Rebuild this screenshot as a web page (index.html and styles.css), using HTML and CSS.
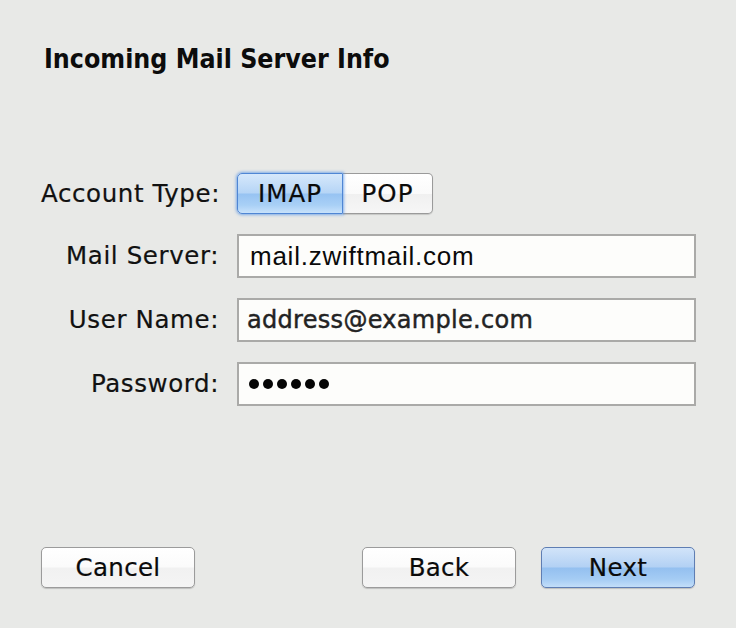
FILE: index.html
```html
<!DOCTYPE html>
<html>
<head>
<meta charset="utf-8">
<link rel="stylesheet" href="styles.css">
</head>
<body>
<div class="page">
  <h1 class="title">Incoming Mail Server Info</h1>
  <div class="form">
    <div class="label">Account Type:</div>
    <div class="segmented">
      <div class="seg seg-on">IMAP</div>
      <div class="seg seg-off">POP</div>
    </div>
    <div class="label">Mail Server:</div>
    <div class="field field-server">mail.zwiftmail.com</div>
    <div class="label">User Name:</div>
    <div class="field field-user">address@example.com</div>
    <div class="label">Password:</div>
    <div class="field field-pass">
      <span class="dot"></span><span class="dot"></span><span class="dot"></span><span class="dot"></span><span class="dot"></span><span class="dot"></span>
    </div>
  </div>
  <div class="actions">
    <div class="btn">Cancel</div>
    <div class="btn-group">
      <div class="btn">Back</div>
      <div class="btn btn-primary">Next</div>
    </div>
  </div>
</div>
</body>
</html>
```

FILE: styles.css
```css
html, body {
  margin: 0;
  padding: 0;
  background: #e8e9e7;
}
body {
  font-family: "DejaVu Sans", Verdana, sans-serif;
  color: #111;
  width: 736px;
  height: 628px;
  overflow: hidden;
}
.page {
  padding: 44px 41px 0 41px;
}
.title {
  margin: 0;
  padding-left: 3px;
  font-family: "DejaVu Sans Condensed", "DejaVu Sans", sans-serif;
  font-stretch: condensed;
  font-weight: bold;
  font-size: 26.5px;
  line-height: 30px;
  color: #0c0c0c;
}
.form {
  margin-top: 99px;
  display: grid;
  grid-template-columns: 178px 459px;
  column-gap: 18px;
  row-gap: 20px;
  align-items: center;
}
.label {
  text-align: right;
  font-size: 24.5px;
  letter-spacing: 0.6px;
  line-height: 28px;
  color: #111;
  white-space: nowrap;
  -webkit-text-stroke: 0.2px #111;
}
.segmented {
  display: flex;
  width: 196px;
  height: 41px;
  box-sizing: border-box;
}
.seg {
  display: flex;
  align-items: center;
  justify-content: center;
  font-size: 24.5px;
  letter-spacing: 1px;
  box-sizing: border-box;
  color: #0a0a0a;
  -webkit-text-stroke: 0.2px #0a0a0a;
}
.seg-on {
  width: 106px;
  border: 1px solid #4f86d4;
  border-radius: 5px 0 0 5px;
  background: linear-gradient(to bottom, #d6e8fb 0%, #b6d5f6 48%, #97c3f2 52%, #a9d0f6 80%, #c8e2fb 100%);
  box-shadow: 0 0 3px 1px rgba(90, 150, 230, 0.75);
  position: relative;
  z-index: 1;
}
.seg-off {
  width: 90px;
  border: 1px solid #9a9a9a;
  border-left: none;
  border-radius: 0 5px 5px 0;
  background: linear-gradient(to bottom, #ffffff 0%, #fafafa 50%, #f0f0f0 52%, #f6f6f6 100%);
  box-shadow: 0 1px 1px rgba(0, 0, 0, 0.15);
}
.field {
  height: 44px;
  box-sizing: border-box;
  border: 2px solid #aaaaa8;
  background: #fdfdfb;
  display: flex;
  align-items: center;
  padding-left: 10px;
  font-size: 24px;
}
.field-server {
  font-family: "Liberation Sans", Arial, sans-serif;
  font-size: 26px;
  letter-spacing: 0.75px;
  padding-left: 11px;
  color: #0a0a0a;
}
.field-user {
  color: #232323;
  letter-spacing: 0.3px;
  -webkit-text-stroke: 0.45px #232323;
  padding-left: 8px;
}
.field-pass {
  gap: 4px;
  padding-left: 10px;
}
.dot {
  width: 10px;
  height: 10px;
  border-radius: 50%;
  background: #050505;
}
.actions {
  margin-top: 141px;
  display: flex;
  justify-content: space-between;
  align-items: center;
}
.btn-group {
  display: flex;
  gap: 25px;
}
.btn {
  width: 154px;
  height: 41px;
  box-sizing: border-box;
  border: 1px solid #9b9b9b;
  border-radius: 5px;
  background: linear-gradient(to bottom, #ffffff 0%, #fbfbfb 48%, #f1f1f1 52%, #f4f4f4 100%);
  box-shadow: 0 1px 1px rgba(0, 0, 0, 0.18);
  display: flex;
  align-items: center;
  justify-content: center;
  font-size: 24.5px;
  letter-spacing: 0.3px;
  color: #0a0a0a;
  -webkit-text-stroke: 0.2px #0a0a0a;
}
.btn-primary {
  border-color: #5f7eb3;
  background: linear-gradient(to bottom, #d2e4f9 0%, #b3d1f4 48%, #94c0f0 52%, #a5ccf4 80%, #c3def9 100%);
}
```
